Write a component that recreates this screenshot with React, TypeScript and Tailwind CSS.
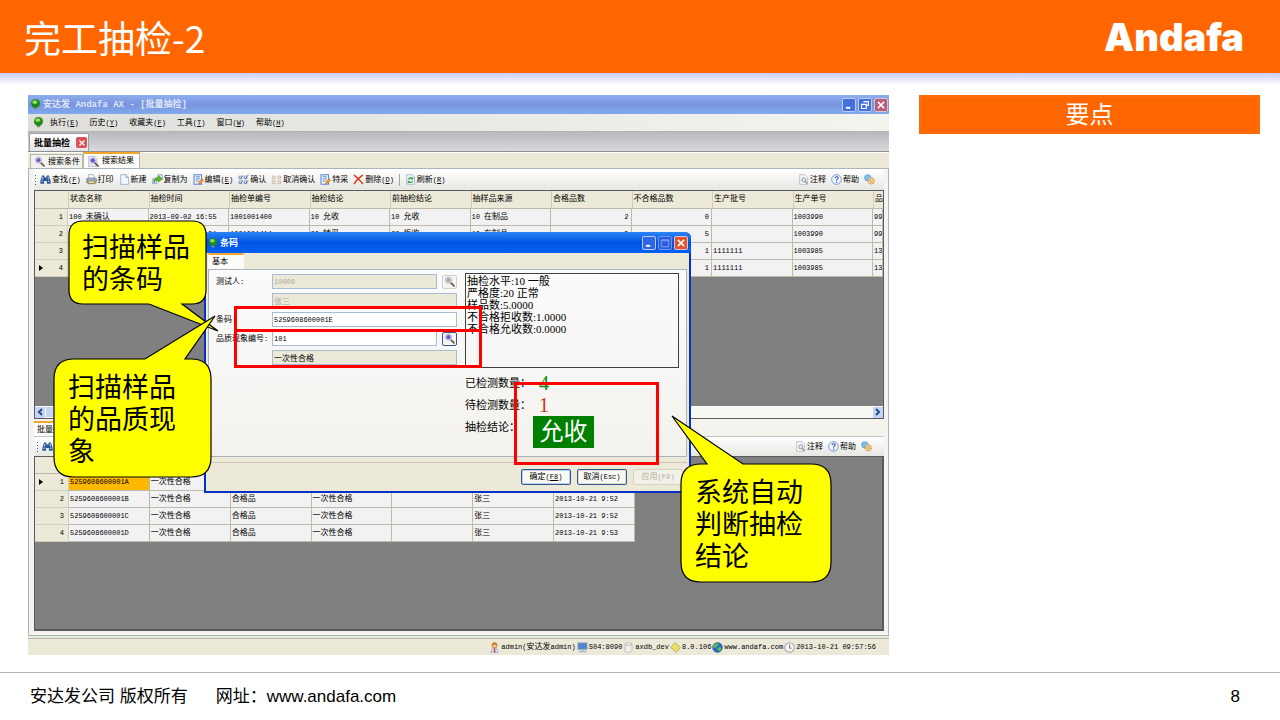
import type { ReactNode } from 'react';
import clsx from 'clsx';

const sans = "font-['Liberation_Sans','Noto_Sans_CJK_SC',sans-serif]";

/* ---------- text ---------- */

// CJK glyphs are drawn at 8px, half-width runs one size smaller in a fixed pitch.
function T({ children, accel }: { children: string; accel?: string }) {
  const runs = children.match(/[\x20-\x7e]+|[^\x20-\x7e]+/g) ?? [];
  return (
    <span className="whitespace-pre text-[8px] leading-[10px]">
      {runs.map((run, i) =>
        /^[\x20-\x7e]/.test(run) ? (
          <span key={i} className="font-['Liberation_Mono',monospace] text-[7px] leading-[10px]">
            {run}
          </span>
        ) : (
          run
        )
      )}
      {accel && (
        <span className="font-['Liberation_Mono',monospace] text-[7px] leading-[10px]">
          (<u>{accel}</u>)
        </span>
      )}
    </span>
  );
}

/* ---------- icons ---------- */

function Svg({ children, className = 'size-[11px]' }: { children: ReactNode; className?: string }) {
  return (
    <svg viewBox="0 0 16 16" className={clsx('shrink-0', className)} fill="none" aria-hidden="true">
      {children}
    </svg>
  );
}

const Bulb = ({ className }: { className?: string }) => (
  <Svg className={className}>
    <path d="M5 11h6l-1 4H6z" fill="#8a8d86" />
    <ellipse cx="8" cy="6.5" rx="6.500" ry="6.500" fill="#1f8a1c" />
    <ellipse cx="7" cy="4.5" rx="3.6" ry="2.8" fill="#8fe05a" />
  </Svg>
);

const Binoculars = () => (
  <Svg>
    <path d="M3 2h3l1 3h2l1-3h3l2.500 8v4H10v-4H6v4H.5v-4z" fill="#2c5796" />
    <path d="M2 10.500h2.500M11.500 10.500H14M4 4v4M12 4v4" stroke="#c7dcf5" strokeWidth="1.400" />
  </Svg>
);

const Printer = () => (
  <Svg>
    <path d="M4 7V1h6l2 2v4" fill="#fff" stroke="#8795ad" />
    <path d="M1 7l2-1h10l2 1v5l-2 2H3l-2-2z" fill="#9fb0c8" stroke="#5c6c88" />
    <path d="M3 10h10v4H3z" fill="#e9d98a" stroke="#7b7a56" />
  </Svg>
);

const Page = () => (
  <Svg>
    <path d="M2.500 1h7.500l4 4v10H2.500z" fill="#f3f8ff" stroke="#7d9cc8" />
    <path d="M10 1v4h4" fill="#c9dcf5" stroke="#7d9cc8" />
  </Svg>
);

const CopyTo = () => (
  <Svg>
    <path d="M1 7h6v7H1z" fill="#dfeaff" stroke="#6f8fc4" />
    <path d="M9 1h6v7H9z" fill="#dfeaff" stroke="#6f8fc4" />
    <path d="M3 13c-1-6 2-8 6-8V2l6 5-6 5V9C6 9 4 10 3 13z" fill="#5fb82a" stroke="#34821a" strokeWidth=".7" />
  </Svg>
);

const Edit = () => (
  <Svg>
    <path d="M1.500 1h11v14h-11z" fill="#eaf2ff" stroke="#5c86c8" strokeWidth="1.500" />
    <path d="M4 4h6M4 7h6M4 10h4" stroke="#4a7ac4" strokeWidth="1.200" />
    <path d="M8 14l1-3 4-4 2.500 2-4.500 4.500z" fill="#f59a22" stroke="#b35d11" strokeWidth=".7" />
  </Svg>
);

const Confirm = () => (
  <Svg>
    <path d="M1.500 3h4v4h-4zM1.500 10h4v4h-4zM9 3h4v4H9zM9 10h4v4H9z" fill="#e3ebfa" stroke="#6f86b8" />
    <path d="M2 5l2 2 3-5M9 5l2 2 4-6M2 12l2 2 3-5M9 12l2 2 4-5" stroke="#4b6fae" strokeWidth="1.200" />
  </Svg>
);

const Unconfirm = () => (
  <Svg>
    <path d="M2 3h4v4H2zM2 10h4v4H2zM10 3h4v4h-4zM10 10h4v4h-4z" fill="#f6eee4" stroke="#bba896" />
  </Svg>
);

const Cross = () => (
  <Svg>
    <path d="M2 2c4 3 8 7 12 12M13.500 2C9 5 5 9 2 14" stroke="#e2381b" strokeWidth="2.200" strokeLinecap="round" />
  </Svg>
);

const Refresh = () => (
  <Svg>
    <path d="M2.500 1h8l3.500 3.500V15H2.500z" fill="#eef5ff" stroke="#8ea8cf" />
    <path d="M5 8c1-3 5-3 6-1M11 10c-1 3-5 3-6 1" stroke="#2f9a31" strokeWidth="1.600" />
    <path d="M12 4v4H8.500zM4 14v-4h3.500z" fill="#2f9a31" />
  </Svg>
);

const Note = () => (
  <Svg>
    <path d="M2.500 1h7.500l4 4v10H2.500z" fill="#f7f7f7" stroke="#a9adb3" />
    <circle cx="8.500" cy="8.500" r="3" fill="#dbe7f3" stroke="#7f8a98" strokeWidth="1.200" />
    <path d="M10.500 11l3 3" stroke="#7f8a98" strokeWidth="1.800" />
  </Svg>
);

const Help = () => (
  <Svg>
    <circle cx="8" cy="8" r="7" fill="#f2f7ff" stroke="#5f86c4" strokeWidth="1.200" />
    <path d="M5.800 6.200c0-3 4.600-3 4.600-.3 0 1.600-2.300 1.700-2.300 3.800" stroke="#2d57a5" strokeWidth="1.500" />
    <circle cx="8.100" cy="12" r="1" fill="#2d57a5" />
  </Svg>
);

const Gears = () => (
  <Svg>
    <circle cx="5.500" cy="5.500" r="4.500" fill="#7fc0e8" stroke="#4c97cb" strokeDasharray="2 1" strokeWidth="1.500" />
    <circle cx="10.500" cy="10" r="4.500" fill="#f2cd8c" stroke="#d29b45" strokeDasharray="2 1" strokeWidth="1.500" />
    <circle cx="10.500" cy="10" r="1.500" fill="#fff" stroke="#c58c36" />
  </Svg>
);

const Magnifier = ({ lens = '#6a5acd', className }: { lens?: string; className?: string }) => (
  <Svg className={className}>
    <path d="M9 9l5.500 5.500" stroke="#6d5a52" strokeWidth="2.600" strokeLinecap="round" />
    <circle cx="6.500" cy="6" r="4.800" fill="#dcdcea" stroke="#b4b4c4" />
    <circle cx="6.500" cy="6" r="3" fill={lens} />
  </Svg>
);

const PageMagnifier = () => (
  <Svg>
    <path d="M1 .5h9l3 3v12H1z" fill="#e6e6f4" stroke="#a9a9c0" />
    <path d="M10 10l4.500 4.500" stroke="#6d5a52" strokeWidth="2.600" strokeLinecap="round" />
    <circle cx="7" cy="6.500" r="3.500" fill="#6350d8" stroke="#b4b4d4" />
  </Svg>
);

const User = () => (
  <Svg>
    <path d="M3 16c0-5 2-7 5-7s5 2 5 7z" fill="#dfe9fb" stroke="#6d8dcb" />
    <path d="M7.300 9.500h1.500L9.500 14 8 16l-1.500-2z" fill="#d8472f" />
    <circle cx="8" cy="5" r="3.700" fill="#f3c796" stroke="#a8672b" />
    <path d="M4 5c0-6 8-6 8 0-2-1-5-2-8 0z" fill="#c98128" />
  </Svg>
);

const Monitor = () => (
  <Svg>
    <path d="M1.500 1.500h13v9h-13z" fill="#4d86d6" stroke="#8798b0" strokeWidth="1.500" />
    <path d="M3 13h10l1.500 2h-13zM7 11h2v2H7z" fill="#a6b3c6" />
  </Svg>
);

const Database = () => (
  <Svg>
    <path d="M3 3c0-2.500 10-2.500 10 0v10c0 2.500-10 2.500-10 0z" fill="#efefef" stroke="#a9a9a9" />
    <path d="M3 3c0 2.500 10 2.500 10 0" stroke="#a9a9a9" />
  </Svg>
);

const Diamond = () => (
  <Svg>
    <path d="M7 1l8 7-6 7-8-7z" fill="#e9e06a" stroke="#a89b2c" />
  </Svg>
);

const Globe = () => (
  <Svg>
    <circle cx="8" cy="8" r="7" fill="#2b6fc6" stroke="#1c4788" />
    <path d="M4 3c3-2 5-1 5 1S6 6 5 8 2 8 1.500 6zM10 8c3-1 4 1 3.500 3S10 14.500 9 12s-1-3 1-4z" fill="#5cc04a" />
  </Svg>
);

const Clock = () => (
  <Svg>
    <circle cx="8" cy="8" r="7" fill="#f4f4f4" stroke="#a4a4a8" strokeWidth="1.500" />
    <path d="M8 3.500V9h3" stroke="#686880" strokeWidth="1.300" />
  </Svg>
);

/* ---------- window chrome ---------- */

function WindowButtons({ active = false }: { active?: boolean }) {
  const blue = active ? 'bg-[#2f66e8]' : 'bg-[#4470dc]';
  return (
    <div className="flex gap-[2px]">
      <button
        aria-label="最小化"
        className={clsx('flex size-[14px] items-center justify-center rounded-[2px] border border-[#b9cbf5]', blue)}
      >
        <Svg className="size-[10px]">
          <path d="M3 11h7v3H3z" fill="#fff" />
        </Svg>
      </button>
      <button
        aria-label="还原"
        className={clsx(
          'flex size-[14px] items-center justify-center rounded-[2px] border',
          active ? 'border-[#6f95ee] bg-[#2a5ce0] text-[#88a5ee]' : 'border-[#b9cbf5] bg-[#4470dc] text-white'
        )}
      >
        <Svg className="size-[10px]">
          {active ? (
            <path d="M2 3h12v11H2zM2 4.500h12" stroke="currentColor" strokeWidth="1.500" />
          ) : (
            <path d="M5.500 2.500h8v6h-3M2.500 7h7.500v6.500H2.500z" stroke="currentColor" strokeWidth="1.800" />
          )}
        </Svg>
      </button>
      <button
        aria-label="关闭"
        className={clsx(
          'flex size-[14px] items-center justify-center rounded-[2px] border border-[#d9c3d6]',
          active ? 'bg-[#e1532d]' : 'bg-[#b8607a]'
        )}
      >
        <Svg className="size-[10px]">
          <path d="M3 3l10 10M13 3L3 13" stroke="#fff" strokeWidth="2.400" />
        </Svg>
      </button>
    </div>
  );
}

function ToolButton({ icon, label, accel }: { icon: ReactNode; label: string; accel?: string }) {
  return (
    <button className="flex items-center gap-px">
      {icon}
      <T accel={accel}>{label}</T>
    </button>
  );
}

const Grip = () => (
  <span className="-mr-px flex flex-col gap-[2px]">
    {[0, 1, 2, 3].map((i) => (
      <span key={i} className="size-px bg-[#4b5f8c]" />
    ))}
  </span>
);

function ToolbarEnd() {
  return (
    <div className="ml-auto flex items-center gap-[5px]">
      <ToolButton icon={<Note />} label="注释" />
      <ToolButton icon={<Help />} label="帮助" />
      <button aria-label="设置">
        <Gears />
      </button>
    </div>
  );
}

/* ---------- data ---------- */

const menus = [
  ['执行', 'E'],
  ['历史', 'Y'],
  ['收藏夹', 'F'],
  ['工具', 'T'],
  ['窗口', 'W'],
  ['帮助', 'H'],
];

const tools: { icon: ReactNode; label: string; accel?: string }[] = [
  { icon: <Binoculars />, label: '查找', accel: 'F' },
  { icon: <Printer />, label: '打印' },
  { icon: <Page />, label: '新建' },
  { icon: <CopyTo />, label: '复制为' },
  { icon: <Edit />, label: '编辑', accel: 'E' },
  { icon: <Confirm />, label: '确认' },
  { icon: <Unconfirm />, label: '取消确认' },
  { icon: <Edit />, label: '特采' },
  { icon: <Cross />, label: '删除', accel: 'D' },
];

const headers = [
  '状态名称',
  '抽检时间',
  '抽检单编号',
  '抽检结论',
  '前抽检结论',
  '抽样品来源',
  '合格品数',
  '不合格品数',
  '生产批号',
  '生产单号',
  '品',
];

const inspections = [
  ['100 未确认', '2013-09-02 16:55', '1001001400', '10 允收', '10 允收', '10 在制品', '2', '0', '', '1003990', '99'],
  ['', '2013-09-02 16:51', '1001001414', '20 特采', '20 拒收', '10 在制品', '5', '5', '', '1003990', '99'],
  ['', '', '', '', '', '', '', '1', '1111111', '1003985', '13'],
  ['', '', '', '', '', '', '', '1', '1111111', '1003985', '13'],
];

const samples = [
  ['5259608600001A', '一次性合格', '', '', '', '', ''],
  ['5259608600001B', '一次性合格', '合格品', '一次性合格', '', '张三', '2013-10-21 9:52'],
  ['5259608600001C', '一次性合格', '合格品', '一次性合格', '', '张三', '2013-10-21 9:52'],
  ['5259608600001D', '一次性合格', '合格品', '一次性合格', '', '张三', '2013-10-21 9:53'],
];

const statusItems = [
  { icon: <User />, text: 'admin(安达发admin)' },
  { icon: <Monitor />, text: 'S04:8090' },
  { icon: <Database />, text: 'axdb_dev' },
  { icon: <Diamond />, text: '8.0.106' },
  { icon: <Globe />, text: 'www.andafa.com' },
  { icon: <Clock />, text: '2013-10-21 09:57:56' },
];

/* ---------- grids ---------- */

const cellBase =
  'h-[17px] overflow-hidden border-r border-b border-[#bdbaab] p-0 text-[8px] leading-[10px] whitespace-nowrap';

function RowHead({ n, current }: { n: number; current: boolean }) {
  return (
    <th className="h-[17px] border-r border-b border-[#d0cdbc] bg-[#ece9d8] p-0 pr-1 text-[8px] leading-[10px] font-normal">
      <div className="flex items-center justify-between pl-1">
        <svg viewBox="0 0 4 6" className={clsx('h-[6px] w-1', !current && 'invisible')}>
          <path d="M0 0l4 3-4 3z" />
        </svg>
        <T>{String(n)}</T>
      </div>
    </th>
  );
}

function InspectionGrid() {
  return (
    <table className="w-full table-fixed border-separate border-spacing-0">
      <thead>
        <tr>
          <th className="h-[18px] w-[33px] border-b border-[#bdbaab] bg-[#ece9d8]" />
          {headers.map((h, i) => (
            <th
              key={h}
              className={clsx(
                'h-[18px] overflow-hidden border-b border-l border-b-[#bdbaab] border-l-[#cfccbc] bg-[#ece9d8] p-0 pb-px pl-px text-left text-[8px] leading-[10px] font-normal whitespace-nowrap',
                i === headers.length - 1 && 'w-[10px]'
              )}
            >
              <T>{h}</T>
            </th>
          ))}
        </tr>
      </thead>
      <tbody>
        {inspections.map((row, r) => (
          <tr key={r}>
            <RowHead n={r + 1} current={r === 3} />
            {row.map((v, c) => (
              <td key={c} className={clsx(cellBase, 'bg-[#f2f2f2]', c === 6 || c === 7 ? 'pr-[2px] text-right' : 'pl-px')}>
                <T>{v}</T>
              </td>
            ))}
          </tr>
        ))}
      </tbody>
    </table>
  );
}

function SampleGrid() {
  return (
    <table className="w-[600px] table-fixed border-separate border-spacing-0">
      <thead>
        <tr>
          <th className="h-[17px] w-[34px] border-r border-b border-[#bdbaab] bg-[#ece9d8]" />
          {samples[0].map((_, i) => (
            <th key={i} className="h-[17px] border-b border-[#bdbaab] bg-[#ece9d8]" />
          ))}
        </tr>
      </thead>
      <tbody>
        {samples.map((row, r) => (
          <tr key={r}>
            <RowHead n={r + 1} current={r === 0} />
            {row.map((v, c) => (
              <td key={c} className={clsx(cellBase, 'pl-px', r === 0 && c === 0 ? 'bg-[#ffb800]' : 'bg-[#f2f2f2]')}>
                <T>{v}</T>
              </td>
            ))}
          </tr>
        ))}
      </tbody>
    </table>
  );
}

/* ---------- dialog ---------- */

const field = 'h-[15px] min-w-0 flex-1 border border-[#a5bcd3] px-px';
const fieldLabel = 'w-14 text-[8px] leading-[10px]';

function Lookup({ muted }: { muted?: boolean }) {
  return (
    <button
      aria-label="查询"
      className={clsx(
        'ml-[5px] flex h-[14px] w-[15px] items-center justify-center rounded-[2px] border bg-[#f6f5f0]',
        muted ? 'border-[#d5d2c4]' : 'border-[#33598c]'
      )}
    >
      <Magnifier lens={muted ? '#a8a8b0' : '#6350d8'} />
    </button>
  );
}

function BarcodeDialog() {
  return (
    <div className="absolute top-[137px] left-[176px] w-[487px] rounded-t-md border-2 border-t-0 border-[#0831c4] bg-[#ece9d8]">
      <div className="-mx-[2px] flex h-[21px] items-center rounded-t-md bg-linear-to-b from-[#2b84f6] via-[#0054e3] to-[#0060f4] pr-[3px] pl-1">
        <Bulb className="size-[10px]" />
        <h2 className="ml-[2px] text-[9px] leading-[12px] font-bold text-white">条码</h2>
        <div className="ml-auto">
          <WindowButtons active />
        </div>
      </div>

      <div className="mx-[2px] flex h-[16px] items-end">
        <button className="flex h-[16px] w-9 items-center rounded-t-[2px] border-t-2 border-[#f5a72c] bg-[#fbfbf9] pl-1">
          <T>基本</T>
        </button>
      </div>

      <div className="mx-[2px] flex h-[188px] justify-between border border-[#a9b5bd] bg-linear-to-b from-[#fbfbfb] to-[#f3f2ee] pr-[7px] pl-[7px]">
        <div className="flex w-[241px] flex-col gap-1 pt-1">
          <div className="flex items-center">
            <label htmlFor="tester" className={fieldLabel}>
              <T>测试人:</T>
            </label>
            <input
              id="tester"
              disabled
              defaultValue="10006"
              className={clsx(field, "bg-[#ece9d8] font-['Liberation_Mono',monospace] text-[7px] text-[#aca899]")}
            />
            <Lookup muted />
          </div>
          <div className="flex pl-14">
            <input
              aria-label="测试人姓名"
              disabled
              defaultValue="张三"
              className={clsx(field, 'bg-[#ece9d8] text-[8px] text-[#aca899]')}
            />
          </div>
          <div className="flex items-center">
            <label htmlFor="barcode" className={fieldLabel}>
              <T>条码:</T>
            </label>
            <input
              id="barcode"
              defaultValue="5259608600001E"
              className={clsx(field, "bg-white font-['Liberation_Mono',monospace] text-[7px]")}
            />
          </div>
          <div className="flex items-center">
            <label htmlFor="defect" className={fieldLabel}>
              <T>品质现象编号:</T>
            </label>
            <input
              id="defect"
              defaultValue="101"
              className={clsx(field, "bg-white font-['Liberation_Mono',monospace] text-[7px]")}
            />
            <Lookup />
          </div>
          <div className="flex pl-14">
            <input
              aria-label="品质现象"
              readOnly
              defaultValue="一次性合格"
              className={clsx(field, 'bg-[#ece9d8] text-[8px]')}
            />
          </div>
        </div>

        <div className="w-[214px] pt-[3px]">
          <div className="h-[95px] border border-[#404040] pt-px pl-px font-['Liberation_Serif','Noto_Sans_CJK_SC',serif] text-[11px] leading-3">
            <p>抽检水平:10 一般</p>
            <p>严格度:20 正常</p>
            <p>样品数:5.0000</p>
            <p>不合格拒收数:1.0000</p>
            <p>不合格允收数:0.0000</p>
          </div>
          <dl className="mt-1 grid grid-cols-[68px_1fr] text-[11px] leading-[22px]">
            <dt>已检测数量：</dt>
            <dd className="pl-[6px] font-['Liberation_Serif',serif] text-[20px] text-[#0b8a0b]">4</dd>
            <dt>待检测数量：</dt>
            <dd className="pl-[6px] font-['Liberation_Serif',serif] text-[20px] text-[#c8380e]">1</dd>
            <dt>抽检结论：</dt>
            <dd className="h-8 w-[61px] bg-[#008000] text-center text-[24px] leading-8 text-white">允收</dd>
          </dl>
        </div>
      </div>

      <div className="mx-[2px] mt-[5px] flex h-[29px] items-center justify-end gap-[6px] border-t border-[#c9c6b6] pr-1">
        <button className="flex h-4 w-[50px] items-center justify-center rounded-[2px] border border-[#31598c] bg-[#f8f8f5] shadow-[inset_0_0_0_1px_#bcd0ee]">
          <T accel="F8">确定</T>
        </button>
        <button className="flex h-4 w-[50px] items-center justify-center rounded-[2px] border border-[#31598c] bg-[#f8f8f5] shadow-[inset_0_0_0_1px_#dcdccf]">
          <T>取消(Esc)</T>
        </button>
        <button
          disabled
          className="flex h-4 w-[50px] items-center justify-center rounded-[2px] border border-[#d5d2c4] bg-[#f2f0e8] text-[#b5b2a4]"
        >
          <T>应用(F9)</T>
        </button>
      </div>
    </div>
  );
}

/* ---------- annotations ---------- */

function Callout({ className, d, children }: { className: string; d: string; children: ReactNode }) {
  return (
    <div className={clsx('absolute', className)}>
      <svg className="absolute inset-0 size-full overflow-visible" aria-hidden="true">
        <path d={d} fill="#ffff00" stroke="#000" strokeWidth="1.200" />
      </svg>
      <p className="relative text-[27px] leading-8 text-black">{children}</p>
    </div>
  );
}

function AppWindow() {
  return (
    <section className="relative self-start bg-[#ece9d8] text-black">
      <div className="flex h-[19px] items-center bg-linear-to-b from-[#8eaeee] via-[#7a94df] to-[#80aaec] pr-px pl-[2px]">
        <Bulb className="size-[11px]" />
        <h1 className="ml-[2px] font-['Liberation_Mono','Noto_Sans_CJK_SC',monospace] text-[9px] leading-[12px] font-bold text-[#dfe6fa]">
          安达发 Andafa AX - [批量抽检]
        </h1>
        <div className="ml-auto">
          <WindowButtons />
        </div>
      </div>

      <nav className="flex h-[18px] items-center gap-[11px] border-b border-[#b4b4b0] bg-linear-to-r from-[#dededb] to-[#f4f4ef] pl-[5px]">
        <Bulb className="-mr-[5px] size-[11px]" />
        {menus.map(([label, key]) => (
          <button key={key} className="flex">
            <T accel={key}>{label}</T>
          </button>
        ))}
      </nav>

      <div className="flex h-[20px] items-end border-b border-[#8f8f98] bg-linear-to-b from-[#b9b9bd] to-[#dadade]">
        <div className="ml-px flex h-[18px] items-center gap-[6px] rounded-t-[2px] border border-b-0 border-[#9c9ca4] bg-linear-to-b from-white to-[#e4e4e6] pr-px pl-1">
          <b className="text-[9px] leading-[10px]">批量抽检</b>
          <button aria-label="关闭标签" className="flex size-[11px] items-center justify-center rounded-[2px] bg-[#d95157]">
            <Svg className="size-[8px]">
              <path d="M3 3l10 10M13 3L3 13" stroke="#fff" strokeWidth="2.600" />
            </Svg>
          </button>
        </div>
      </div>

      <div className="flex h-[16px] items-end border-t border-white pl-[2px]">
        <button className="flex h-[14px] items-center gap-[3px] border border-b-0 border-[#b8b6a8] bg-[#f3f2ec] pr-[2px] pl-[3px]">
          <Magnifier className="size-[11px]" />
          <T>搜索条件</T>
        </button>
        <button className="flex h-[16px] items-center gap-[3px] border border-t-2 border-b-0 border-[#b8b6a8] border-t-[#f5a72c] bg-[#fbfbf9] pr-[5px] pl-1">
          <PageMagnifier />
          <T>搜索结果</T>
        </button>
      </div>

      <div className="border border-[#a9b5bd] bg-[#f4f3ee] pr-1 pb-1 pl-[5px]">
        <div className="flex h-[21px] items-center gap-[5px] bg-linear-to-b from-white to-[#e6e6e2] pr-[9px] pl-px">
          <Grip />
          {tools.map((t) => (
            <ToolButton key={t.label} {...t} />
          ))}
          <span className="h-3 w-px bg-[#a5a5a0]" />
          <ToolButton icon={<Refresh />} label="刷新" accel="R" />
          <ToolbarEnd />
        </div>

        <div className="flex h-[229px] flex-col border border-[#5a5a5a] bg-[#808080]">
          <InspectionGrid />
          <div className="mt-auto flex h-[12px] items-center justify-between bg-[#f8f8f4]">
            <button aria-label="向左" className="flex h-[11px] w-[10px] items-center justify-center bg-[#c5d5fa]">
              <svg viewBox="0 0 6 8" className="h-[8px] w-[6px]" fill="none" stroke="#2c4a82" strokeWidth="2">
                <path d="M5 1L2 4l3 3" />
              </svg>
            </button>
            <span className="mr-auto ml-px h-[10px] w-80 bg-[#c5d5fa]" />
            <button aria-label="向右" className="flex h-[11px] w-[10px] items-center justify-center bg-[#c5d5fa]">
              <svg viewBox="0 0 6 8" className="h-[8px] w-[6px]" fill="none" stroke="#2c4a82" strokeWidth="2">
                <path d="M1 1l3 3-3 3" />
              </svg>
            </button>
          </div>
        </div>

        <button className="mt-[2px] flex h-[15px] items-center border-t-2 border-[#f5a72c] bg-[#fbfbf9] px-[3px]">
          <T>批量抽检</T>
        </button>
        <div className="flex h-5 items-center gap-[5px] border-t border-[#c0c4c4] bg-linear-to-b from-white to-[#e6e6e2] pr-3 pl-[3px]">
          <Grip />
          <button aria-label="查找">
            <Binoculars />
          </button>
          <ToolbarEnd />
        </div>
        <div className="h-[175px] border-2 border-t border-l border-[#5a5a5a] bg-[#808080]">
          <SampleGrid />
        </div>
      </div>

      <footer className="mt-[2px] flex h-[17px] items-center justify-end gap-px border-t border-[#b8b5a4] pr-[13px]">
        {statusItems.map((s) => (
          <span key={s.text} className="flex items-center gap-px">
            {s.icon}
            <T>{s.text}</T>
          </span>
        ))}
      </footer>

      <BarcodeDialog />

      <div className="absolute top-[211px] left-[206px] h-[26px] w-[248px] border-3 border-[#ff0000]" />
      <div className="absolute top-[234px] left-[206px] h-[39px] w-[248px] border-3 border-[#ff0000]" />
      <div className="absolute top-[287px] left-[486px] h-[83px] w-[145px] border-3 border-[#ff0000]" />

      <Callout
        className="top-[126px] left-[41px] h-[83px] w-[137px] pt-[11px] pl-[13px]"
        d="M14 0H123Q137 0 137 14V69Q137 83 123 83H113L149 110L80 83H14Q0 83 0 69V14Q0 0 14 0Z"
      >
        扫描样品
        <br />
        的条码
      </Callout>
      <Callout
        className="top-[264px] left-[26px] h-[118px] w-[157px] pt-[13px] pl-[14px]"
        d="M20 0H91L161 -43L131 0H137Q157 0 157 20V98Q157 118 137 118H20Q0 118 0 98V20Q0 0 20 0Z"
      >
        扫描样品
        <br />
        的品质现
        <br />象
      </Callout>
      <Callout
        className="top-[369px] left-[653px] h-[118px] w-[150px] pt-[13px] pl-[14px]"
        d="M20 0H26L-9 -48L62 0H130Q150 0 150 20V98Q150 118 130 118H20Q0 118 0 98V20Q0 0 20 0Z"
      >
        系统自动
        <br />
        判断抽检
        <br />
        结论
      </Callout>
    </section>
  );
}

export default function App() {
  return (
    <div className={clsx('flex min-h-screen flex-col bg-white', sans)}>
      <header className="flex h-[73px] items-center justify-between bg-[#ff6600] pr-9 pl-6 text-white">
        <h1 className="font-['Noto_Sans_CJK_SC',sans-serif] text-[37px] leading-[40px]">完工抽检-2</h1>
        <div className="font-['Inter',sans-serif] text-[38px] leading-[40px] font-black">Andafa</div>
      </header>
      <div className="h-3 bg-linear-to-b from-[#ccccff] to-white" />

      <main className="grid flex-1 grid-cols-[861fr_341fr] gap-[30px] pt-[10px] pr-5 pl-7">
        <AppWindow />
        <aside>
          <h2 className="h-[39px] border-3 border-[#ff6a0a] bg-[#ff6600] text-center text-[24px] leading-[34px] text-white">
            要点
          </h2>
        </aside>
      </main>

      <footer className="flex h-12 items-center justify-between border-t border-[#b4b4b4] pr-10 pl-[30px] text-[17px] leading-6 text-black">
        <div className="flex gap-7">
          <span>安达发公司 版权所有</span>
          <span>
            网址：<a href="#andafa">www.andafa.com</a>
          </span>
        </div>
        <span>8</span>
      </footer>
    </div>
  );
}
